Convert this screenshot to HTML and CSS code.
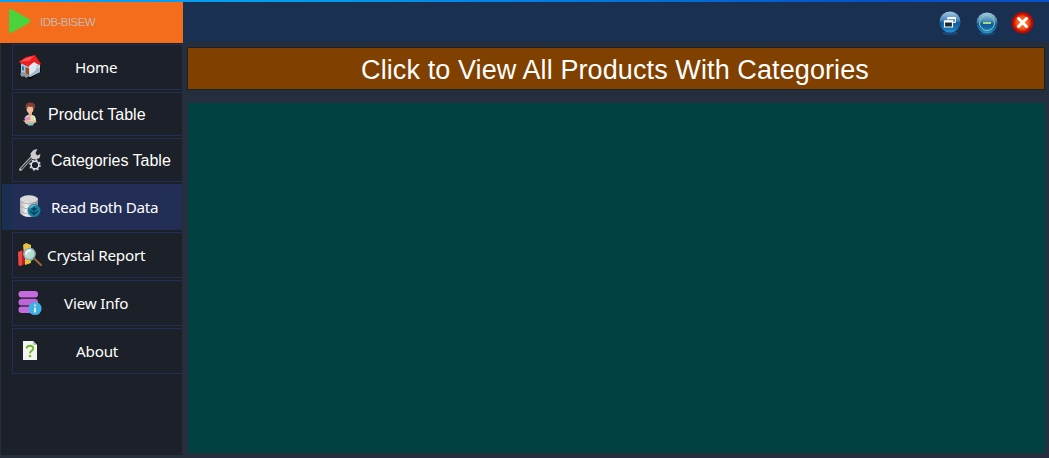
FILE: index.html
```html
<!DOCTYPE html>
<html lang="en">
<head>
<meta charset="utf-8">
<title>IDB-BISEW</title>
<link rel="stylesheet" href="styles.css">
</head>
<body>
<div class="window">
  <header class="topbar">
    <div class="brand">
      <svg class="play" width="24" height="26" viewBox="0 0 24 26"><path d="M2 3Q2 0 5 1.500L22 11Q25 13 22 15L5 24.500Q2 26 2 23Z" fill="#4bd33b"/></svg>
      <span class="brand-name">IDB-BISEW</span>
    </div>
    <div class="controls">
      <svg width="24" height="26" viewBox="0 0 24 26">
        <defs>
          <linearGradient id="blue" x2="0" y2="1"><stop stop-color="#a4cae3"/><stop offset=".4" stop-color="#4a8abc"/><stop offset=".55" stop-color="#11599b"/><stop offset=".8" stop-color="#1671b5"/><stop offset="1" stop-color="#2b96d4"/></linearGradient>
          <radialGradient id="red"><stop stop-color="#ff8b21"/><stop offset=".6" stop-color="#ea5218"/><stop offset=".82" stop-color="#c90c05"/><stop offset="1" stop-color="#ad0803"/></radialGradient>
        </defs>
        <ellipse cx="12" cy="23" rx="8" ry="2" fill="#1a609b" opacity=".5"/>
        <circle cx="12" cy="12" r="10.500" fill="url(#blue)"/>
        <path d="M10 7.500h7.500v5H10z" fill="#6f9dbf" stroke="#e5edf0" stroke-width="1"/><path d="M9.500 8h8.500" stroke="#fff" stroke-width="2"/>
        <path d="M6.500 11h8v6h-8z" fill="#182a36" stroke="#f5f7f8" stroke-width="1.200"/><path d="M6 11.500h9" stroke="#fff" stroke-width="2"/>
      </svg>
      <svg width="24" height="26" viewBox="0 0 24 26">
        <ellipse cx="12" cy="23.500" rx="8" ry="1.700" fill="#1a609b" opacity=".5"/>
        <circle cx="12" cy="13" r="10.500" fill="url(#blue)"/>
        <circle cx="12" cy="13" r="7.500" fill="none" stroke="#8bcf9d" stroke-width="1"/>
        <path d="M8 13h8" stroke="#a6dc78" stroke-width="2"/>
      </svg>
      <svg width="24" height="26" viewBox="0 0 24 26">
        <circle cx="12.500" cy="12.800" r="10.800" fill="url(#red)"/>
        <path d="M8.500 8.500l8 8m0-8l-8 8" stroke="#fff" stroke-width="3" stroke-linecap="round"/>
      </svg>
    </div>
  </header>
  <div class="workspace">
    <nav class="sidebar">
      <a class="item home">
        <svg class="icon" width="26" height="26" viewBox="0 0 26 26"><path d="M14 18l10-4v3l-10 8-3-1z" fill="#080a0e"/><path d="M4 9l9 4v10l-9-4z" fill="#a8c5dc"/><path d="M13 12l7-5 3 3v8l-10 5z" fill="#c9d8e5"/><path d="M13 14v9l10-5v-4z" fill="#a5b9cb"/><path d="M8.500 13l3.500 1.500v7l-3.500-2z" fill="#9d4d12"/><path d="M5 12l2 .7v4l-2-.7z" fill="#267caa"/><path d="M1.500 8L9 3l9-2 6 9-2 1-10 2z" fill="#f01d20"/><path d="M3 7.500L9 4l8-2-5 5z" fill="#ff5552"/><path d="M12 12l5-4 5 3-3 1v4l-6 5z" fill="#dce8f2"/><path d="M3 20l2-2 4 1 3 3-3 2-2-2-2 1z" fill="#93969d"/></svg>
        <span class="label">Home</span>
      </a>
      <a class="item product">
        <svg class="icon" width="26" height="26" viewBox="0 0 26 26"><path d="M8 20q-1-6 4-6h3q4 0 4 6l-3 3H9z" fill="#d6f0ef"/><path d="M6 19l3 1 9-.5 2 1.500-4 1.500H9z" fill="#efb48c"/><path d="M11.500 10H15v4l-1.500 2-2-2z" fill="#e9a887"/><ellipse cx="13" cy="7.500" rx="3.500" ry="4.500" fill="#f1bb97"/><path d="M8.500 7Q8 1.500 13 1.500q6 0 5 5l-1.500 3-.8-3.500-4.700-.5-1.200 3z" fill="#7e4033"/><path d="M7 17l6-2 1 4-5 1z" fill="#df91bd"/><path d="M13 16l4-1v4l-3 1z" fill="#e6df8c"/><path d="M10 22h7l-1 2.500h-5z" fill="#76c6c7"/></svg>
        <span class="label">Product Table</span>
      </a>
      <a class="item categories">
        <svg class="icon" width="26" height="26" viewBox="0 0 26 26"><path d="M3.500 22.500L16 9" stroke="#bfc0c0" stroke-width="2.800" stroke-linecap="round"/><path d="M4 22L15 10.500" stroke="#303238" stroke-width="1.100"/><path d="M14 10.500l-.5-4 3-3.500 4-1-2 4 1.500 2.500 3.500-1.500-1 4-3.500 1.500-3.500-.5z" fill="#cccccb"/><circle cx="18" cy="18" r="5" fill="#1c2028" stroke="#d8dbe2" stroke-width="1.500" stroke-dasharray="1.960 1.967"/><circle cx="18" cy="18" r="3.800" fill="#1c2028" stroke="#e2e4ec" stroke-width="1.400"/></svg>
        <span class="label">Categories Table</span>
      </a>
      <a class="item read active">
        <svg class="icon" width="26" height="26" viewBox="0 0 26 26"><defs><linearGradient id="silver"><stop stop-color="#b4b4b4"/><stop offset=".35" stop-color="#f2f2f2"/><stop offset="1" stop-color="#8b8b8b"/></linearGradient></defs><path d="M3 5v14q3 4 9 4t9-4V5z" fill="url(#silver)"/><ellipse cx="12" cy="5" rx="9" ry="3.700" fill="#d9d9d9"/><path d="M3 7q9 6 18 0M3 12q9 6 18 0M3 17q9 6 18 0" stroke="#a0a3a5" stroke-width=".8" fill="none"/><circle cx="17" cy="16.500" r="6.500" fill="#147f9f"/><path d="M11.500 15q2-5 8-4l-6 3z" fill="#67b7cb"/><path d="M17 12.500V21m-4-4l4 3.500 4-3.500m-6.500-2h5" stroke="#063c5d" stroke-width="1.300" fill="none"/></svg>
        <span class="label">Read Both Data</span>
      </a>
      <a class="item crystal">
        <svg class="icon" width="26" height="26" viewBox="0 0 26 26"><path d="M6 3l3-2 5 2v18l-6 2z" fill="#e8c33d"/><path d="M1 10l4-2 3 2v12l-5 2-2-1z" fill="#b91e22"/><path d="M1 10l4-1v14l-3 1z" fill="#e34c4b"/><path d="M13 6l4 1v10l-4 3z" fill="#76c855"/><circle cx="12.500" cy="12" r="5.700" fill="#b4e0df" fill-opacity=".9" stroke="#91a9b9" stroke-width="1.200"/><path d="M9 12.500q0-4 5-4" stroke="#effbff" stroke-width="1.800" fill="none"/><path d="M17 16.500l7 6.500" stroke="#9f693d" stroke-width="1.900" stroke-linecap="round"/></svg>
        <span class="label">Crystal Report</span>
      </a>
      <a class="item info">
        <svg class="icon" width="26" height="26" viewBox="0 0 26 26"><rect x="1.500" y="1" width="19.500" height="6.500" rx="3" fill="#c66bdd"/><rect x="1.500" y="9" width="19.500" height="6.500" rx="3" fill="#bd66d7"/><rect x="1.500" y="16.500" width="19.500" height="6.500" rx="3" fill="#c66bdd"/><path d="M4 8.300h15M4 16h12" stroke="#4b305c"/><circle cx="18" cy="18.500" r="6.600" fill="#40afe2"/><path d="M18 17.500v5M18 14.500v1.700" stroke="#f1fbff" stroke-width="1.600"/></svg>
        <span class="label">View Info</span>
      </a>
      <a class="item about">
        <svg class="icon" width="26" height="26" viewBox="0 0 26 26"><path d="M6 3h10l4 4v15H6z" fill="#f4f5f2"/><path d="M16 3l4 4h-4z" fill="#bfc3bf"/><path d="M9.700 10.500q0-2.700 3.300-2.700t3.200 2.700q0 1.500-1.700 2.400-1.500.8-1.500 2.600" stroke="#72b925" stroke-width="2" fill="none"/><path d="M11.800 17h2.400v2.200h-2.400z" fill="#72b925"/></svg>
        <span class="label">About</span>
      </a>
    </nav>
    <main class="content">
      <button class="banner">Click to View All Products With Categories</button>
      <section class="panel"></section>
    </main>
  </div>
</div>
</body>
</html>
```
FILE: styles.css
```css
* { box-sizing: border-box; }
body { margin: 0; }
.window {
  width: 1049px;
  height: 458px;
  display: flex;
  flex-direction: column;
  background: #252e3d;
  overflow: hidden;
}
.topbar {
  height: 42px;
  flex: none;
  display: flex;
  justify-content: space-between;
  background: #1a3050;
  border-top: 2px solid;
  border-image: linear-gradient(90deg, #0aa0f5, #009bf0 30%, #0550c8 85%, #0753cc) 2;
}
.brand {
  width: 183px;
  height: 41px;
  display: flex;
  align-items: flex-start;
  padding: 6px 0 0 7px;
  background: #f36d1d;
  z-index: 1;
}
.brand-name {
  margin: 6px 0 0 9px;
  font: 11.5px/17px "Liberation Sans", Arial, sans-serif;
  letter-spacing: -0.55px;
  color: #c9b7ac;
}
.controls {
  display: flex;
  padding: 8px 15px 0 0;
}
.controls svg { margin-left: 12px; }
.controls svg:nth-child(2) { margin-left: 13px; }
.controls svg:last-child { margin-left: 11px; }
.workspace {
  flex: 1;
  display: flex;
}
.sidebar {
  width: 181px;
  height: 413px;
  margin-left: 1px;
  padding: 2px 0 0 11px;
  display: flex;
  flex-direction: column;
  gap: 2px;
  background: #1c2028;
}
.item {
  height: 46px;
  flex: none;
  display: flex;
  align-items: center;
  border: 1px solid #222e56;
  border-right: 0;
  padding-left: 4px;
  color: #fff;
  font: 15.2px/22px "Noto Sans", "Open Sans", sans-serif;
  letter-spacing: -0.2px;
  white-space: nowrap;
}
.icon { flex: none; }
.product, .categories {
  height: 44px;
  font: 16px/20px "Liberation Sans", Arial, sans-serif;
  letter-spacing: 0;
}
.product .label, .categories .label { padding-top: 2px; }
.active {
  margin-left: -10px;
  border-left: 10px solid #1a3050;
  padding-left: 5px;
  background: #222e56;
}
.home .label { margin-left: 32px; }
.product .label { margin-left: 5px; }
.categories .label { margin-left: 8px; }
.read .label { margin-left: 8px; letter-spacing: -0.3px; }
.crystal .label { margin-left: 4px; }
.info .label { margin-left: 21px; }
.about .label { margin-left: 33px; }
.content {
  width: 858px;
  margin-left: 5px;
  padding-top: 5px;
}
.banner {
  display: block;
  width: 858px;
  height: 43px;
  padding: 2px 2px 0 0;
  border: 1px solid #1c2028;
  background: #804000;
  color: #fff;
  font: 27px/38px "Liberation Sans", Arial, sans-serif;
  letter-spacing: 0.1px;
}
.panel {
  height: 350px;
  margin: 13px 0 0 1px;
  background: #004040;
}
```
